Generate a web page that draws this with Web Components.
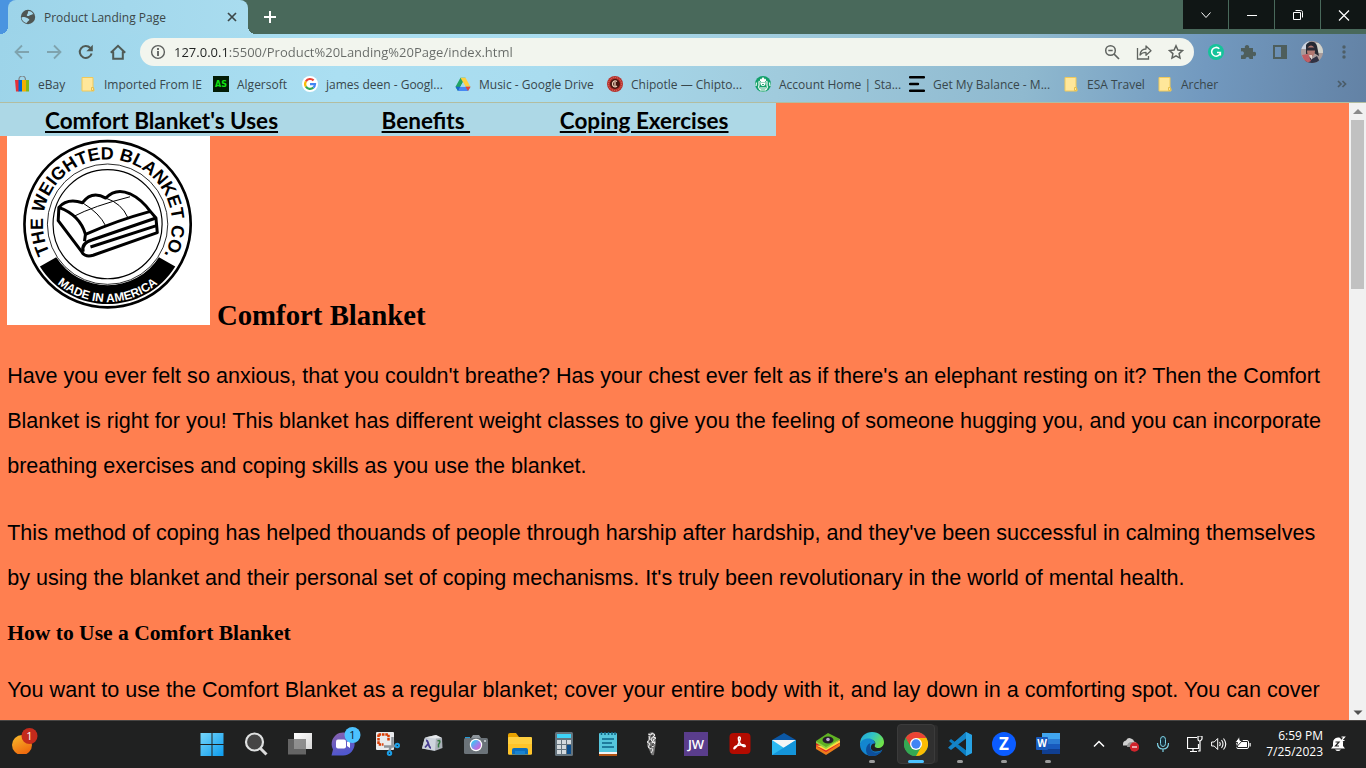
<!DOCTYPE html>
<html lang="en">
<head>
<meta charset="utf-8">
<title>Product Landing Page</title>
<style>
html, body { margin: 0; height: 100%; }
body { font-family: "Open Sans", "Noto Sans", sans-serif; font-size: 12px; overflow: hidden; }
</style>
</head>
<body>
<desktop-screen></desktop-screen>
<script>
const define = (name, html) => {
  const template = document.createElement('template');
  template.innerHTML = html;
  customElements.define(name, class extends HTMLElement {
    constructor() {
      super();
      this.attachShadow({ mode: 'open' }).append(template.content.cloneNode(true));
    }
  });
};

/* ---------- icon set ---------- */
const folder = '<path d="M2 1.5h11v10.5l1 .5v2.5H2z" fill="#ffe79a" stroke="#f0c95a"/><path d="M11.5 14.5v-3h2v3z" fill="#ffe79a" stroke="#e8c04a"/>';
const icons = {
  globe: [16, '<circle cx="8" cy="8" r="7.200" fill="#4f5653"/><path d="M1.500 8.500c2-.5 3.500-.6 5 .2 1.500.4 1.600 1 2.300 1.300 1 .5.500 1.500-.5 2-1 .4-.8 1.500-1.800 2C4 13.500 1.500 11 1.500 8.500zM8.500 2c2 0 4 1.200 5 3.300-1.200-.5-1.700.8-2.700.6-1-.2-1.500 1.300-2.700 1.200-1.200 0-1.800-1.200-.8-1.900C8.300 4.500 7.500 3 8.500 2z" fill="#a5d8eb"/>'],
  close: [16, '<path d="M4 4l8 8M12 4l-8 8" stroke="#3c4748" stroke-width="1.700"/>'],
  plus: [16, '<path d="M8 2v12M2 8h12" stroke="#fff" stroke-width="2"/>'],
  down: [16, '<path d="M3.500 5.500 8 10.500l4.500-5" fill="none" stroke="#fff"/>'],
  minimize: [16, '<path d="M3 8.500h10" stroke="#fff"/>'],
  restore: [16, '<path d="M5.500 3.500h5c1.500 0 2 .7 2 2v5M3.500 5.500h7v7h-7z" fill="none" stroke="#fff" stroke-linejoin="round"/>'],
  quit: [16, '<path d="M3 3.500l10 10M13 3.500l-10 10" stroke="#fff" stroke-width="1.200"/>'],
  back: [16, '<path d="M15 8H2M8 1.500 1.500 8 8 14.500" fill="none" stroke="#7fa3ae" stroke-width="1.800"/>'],
  forward: [16, '<path d="M1 8h13M8 1.500 14.500 8 8 14.500" fill="none" stroke="#7fa3ae" stroke-width="1.800"/>'],
  reload: [16, '<path d="M13.600 9.500A6 6 0 1 1 12.300 4" fill="none" stroke="#4f5a55" stroke-width="2"/><path d="M14.800.8v6.400H8.400z" fill="#4f5a55"/>'],
  home: [16, '<path d="M.8 8.800 8 1.800l7.200 7M3.200 7.500v7.200h9.600V7.500" fill="none" stroke="#4f5a55" stroke-width="2"/>'],
  info: [16, '<circle cx="8" cy="8" r="6.400" fill="none" stroke="#5b5e5c" stroke-width="1.400"/><path d="M8 7v5M8 4v2" stroke="#5b5e5c" stroke-width="1.800"/>'],
  zoomout: [16, '<circle cx="6.500" cy="6.500" r="4.800" fill="none" stroke="#5f635f" stroke-width="1.500"/><path d="M10 10l5 5M4.300 6.500h4.400" stroke="#5f635f" stroke-width="1.700"/>'],
  share: [16, '<path d="M1.500 4v11h11v-3" fill="none" stroke="#5f635f" stroke-width="1.300"/><path d="M4 11c.4-4 3-6 6-6V2l5 4.700-5 4.500V8.300C7.500 8.300 5.500 9 4 11z" fill="none" stroke="#5f635f" stroke-width="1.300" stroke-linejoin="round"/>'],
  star: [16, '<path d="M8 1.800l1.900 4.200 4.600.5-3.400 3.100.9 4.500L8 11.800l-4 2.300.9-4.500L1.500 6.500 6.100 6z" fill="none" stroke="#5f635f" stroke-width="1.500"/>'],
  grammarly: [16, '<circle cx="8" cy="8" r="8" fill="#15c39a"/><path d="M11.300 4.800A4.400 4.400 0 1 0 12.400 8.500H9M12.400 8.500v3" fill="none" stroke="#fff" stroke-width="1.500"/>'],
  puzzle: [16, '<path d="M1 4h4a2.200 2.200 0 1 1 4 0h4v4a2.200 2.200 0 1 1 0 3.800V15H9.500a2 2 0 1 0-4 0H1v-4a2 2 0 1 0 0-3.500z" fill="#4e5e5c"/>'],
  sidepanel: [16, '<path d="M2 2h12v12H2z" fill="none" stroke="#4e5e5c" stroke-width="2"/><path d="M9 2h5v12H9z" fill="#4e5e5c"/>'],
  avatar: [24, '<clipPath id="c"><circle cx="12" cy="12" r="11"/></clipPath><g clip-path="url(#c)"><path d="M0 0h24v24H0z" fill="#a99c9b"/><path d="M0 0h9v9H0z" fill="#cdd5e2"/><path d="M15 3h9v10h-9z" fill="#d2d3cc"/><path d="M6 5c3-5 10-4 11 1l2 10-5-3-8 1z" fill="#252932"/><ellipse cx="11" cy="11" rx="4" ry="5.500" fill="#b17870"/><path d="M6.500 7.500h9v3h-9z" fill="#2b2b35"/><path d="M3 24l4-8 5 3 5-3 4 8z" fill="#303244"/><path d="M2 15l6-1 3 7-6 3z" fill="#c05d64"/><path d="M9 15h3v5z" fill="#e7d5cf"/></g>'],
  dots: [16, '<circle cx="8" cy="3" r="1.700" fill="#4e5e66"/><circle cx="8" cy="8" r="1.700" fill="#4e5e66"/><circle cx="8" cy="13" r="1.700" fill="#4e5e66"/>'],
  more: [16, '<path d="M4 5l3 3-3 3M8.500 5l3 3-3 3" fill="none" stroke="#4b5c68" stroke-width="1.700"/>'],
  ebay: [16, '<path d="M5 5V3a3.200 3 0 0 1 6.400 0v2" fill="none" stroke="#7c8589" stroke-width="1.200"/><path d="M1 4h4v11.500H2z" fill="#e53238"/><path d="M4.500 4H8v11.500H4.500z" fill="#0064d2"/><path d="M8 4h4v11.500H8z" fill="#f5af02"/><path d="M12 4h3v11.500h-3z" fill="#86b817"/>'],
  folder: [16, folder],
  alger: [16, '<path d="M0 0h16v16H0z" fill="#031c05"/><text x="8" y="11" text-anchor="middle" font-family="DejaVu Sans" font-size="8" font-weight="700" fill="#12e212">AS</text>'],
  google: [16, '<circle cx="8" cy="8" r="8" fill="#fff"/><g fill="none" stroke-width="2.200"><path d="M3.900 5.300A5 5 0 0 1 11.600 4.400" stroke="#ea4335"/><path d="M3.900 5.300A5 5 0 0 0 3.900 10.700" stroke="#fbbc05"/><path d="M3.900 10.700A5 5 0 0 0 11.300 11.700" stroke="#34a853"/><path d="M11.300 11.700A5 5 0 0 0 13 8.200H8" stroke="#4285f4"/></g>'],
  drive: [16, '<path d="M5.500 1.800h5L5 11.300 3 15 .5 10.700z" fill="#1fa463"/><path d="M5.500 1.800h5l5 8.900h-5z" fill="#ffcf3f"/><path d="M5 10.700h10.500L13 15H3z" fill="#4688f4"/><path d="M10.500 10.700h5L13 15z" fill="#ea4335"/><path d="M.5 10.700H5.300L3 15z" fill="#1767d1"/><path d="M8 6.300l2.500 4.400h-5z" fill="#a5d8eb"/>'],
  chipotle: [16, '<circle cx="8" cy="8" r="8" fill="#b8302b"/><circle cx="8" cy="8" r="6.500" fill="none" stroke="#d78a7b" stroke-width=".8" stroke-dasharray="1 1"/><circle cx="8" cy="8" r="5" fill="#45150f"/><path d="M10 5.500c-3-1.500-4.500.5-4.500 2.500s2 4 4.500 2M8 6v4" fill="none" stroke="#ecd0b9" stroke-width="1.300"/>'],
  starbucks: [16, '<circle cx="8" cy="8" r="8" fill="#12a06a"/><path d="M5 2.500l1 1L8 1l2 2.500 1-1V5H5z" fill="#fff"/><ellipse cx="8" cy="7" rx="2.600" ry="3" fill="#fff"/><path d="M4.500 5C3 7 5 8 3.500 11L5 14M11.500 5C13 7 11 8 12.500 11L11 14M6 11v4.500M10 11v4.500M8 11v4.500M1.500 6.500 1 10M14.500 6.500 15 10" fill="none" stroke="#e7f5ee" stroke-width="1.300"/><path d="M6.500 6.500h1M8.500 6.500h1M7 8.500h2" stroke="#00935c" stroke-width=".8"/>'],
  balance: [16, '<path d="M1 1.200h14M1 8h8M1 14.800h14" stroke="#000" stroke-width="2.400" stroke-linecap="round"/>'],
  weather: [26, '<defs><linearGradient id="g" x2=".5" y2="1"><stop stop-color="#f8bd2c"/><stop offset="1" stop-color="#ef6a0e"/></linearGradient></defs><circle cx="10" cy="17" r="10" fill="url(#g)"/><circle cx="17.500" cy="8" r="8" fill="#c42b1c"/><text x="17.500" y="12" text-anchor="middle" font-family="Open Sans" font-size="11" fill="#fff">1</text>'],
  windows: [24, '<defs><linearGradient id="g" gradientUnits="userSpaceOnUse" x1="0" y1="0" x2="24" y2="24"><stop stop-color="#7ad8fb"/><stop offset="1" stop-color="#0b9bee"/></linearGradient></defs><path d="M.5 1h11v11H.5zM12.500 1h11v11h-11zM.5 13h11v11H.5zM12.500 13h11v11h-11z" fill="url(#g)"/>'],
  search: [24, '<circle cx="10.500" cy="10" r="8.500" fill="#454545" stroke="#dfe1e1" stroke-width="2.200"/><path d="M16.500 16.500l6 6" stroke="#dcdcdc" stroke-width="3"/>'],
  taskview: [24, '<defs><linearGradient id="g" x2="1" y2="1"><stop stop-color="#fff"/><stop offset="1" stop-color="#d6d6d6"/></linearGradient></defs><path d="M6 1h18v16H6z" fill="url(#g)"/><path d="M0 7h18v15.500H0z" fill="#777" fill-opacity=".8"/>'],
  chat: [36, '<defs><linearGradient id="g" x2=".3" y2="1"><stop stop-color="#8b62ac"/><stop offset="1" stop-color="#4f57cf"/></linearGradient></defs><path d="M5.500 29.500l1.500-6A11.500 11.500 0 1 1 17 29.500z" fill="url(#g)"/><rect x="10" y="13.500" width="10" height="9" rx="2" fill="#fff"/><path d="M21 16l3-2v8l-3-2z" fill="#fff"/><circle cx="26.500" cy="9" r="8" fill="#4cc2ff"/><text x="26.500" y="13" text-anchor="middle" font-family="Open Sans" font-size="11" fill="#0b2130">1</text>'],
  snip: [24, '<rect width="18" height="18" rx="1" fill="#e9ebee"/><path d="M2.500 2.500h10v6M2.500 2.500v10h5" fill="none" stroke="#d83b01" stroke-width="2.500" stroke-dasharray="2.600 .8"/><path d="M16.500 5v9.500H8M16.500 14.500l4-1M14.500 15l-1 4" fill="none" stroke="#8d949a" stroke-width="2.500"/><circle cx="21.300" cy="13.500" r="1.700" fill="#222" stroke="#1a9fe8" stroke-width="2"/><circle cx="13.500" cy="21.300" r="1.700" fill="#222" stroke="#1a9fe8" stroke-width="2"/>'],
  dice: [24, '<path d="M5 5.500 16 3l6 3 .5 10-8 3L2 16.500z" fill="#a9b0b7"/><path d="M4.500 6.500 16 5.500l-1 13-13-2z" fill="#cdd4dc"/><path d="M5 5.500 16 3l6 3-6 .5z" fill="#e5e8eb"/><path d="M6 8.500c3-.5 2 7.500 5 7.500M8 12l-3 3.500" fill="none" stroke="#473c91" stroke-width="1.800"/><path d="M17.500 9c3-1.500 3 1 1 3.500v3" fill="none" stroke="#367a43" stroke-width="1.500"/>'],
  camera: [24, '<defs><linearGradient id="g" x2="1" y2="1"><stop offset=".2" stop-color="#46bdf0"/><stop offset=".6" stop-color="#a47bec"/><stop offset="1" stop-color="#e25fb2"/></linearGradient></defs><path d="M1 5h5v3H1z" fill="#239bd8"/><path d="M7 6l2-3h6l2 3z" fill="#8d959b"/><rect y="6" width="24" height="16" rx="1.500" fill="#6b7379"/><circle cx="12" cy="13" r="6.200" fill="#fff"/><circle cx="12" cy="13" r="5" fill="url(#g)"/><path d="M20 8h2v2h-2z" fill="#b8bec2"/>'],
  explorer: [24, '<path d="M0 3q0-2 2-2h6l3 4v4H0z" fill="#e8a200"/><rect y="5" width="24" height="17.500" rx="1" fill="#ffcf40"/><path d="M0 12h24v9q0 1.500-1.500 1.500h-21Q0 22.500 0 21z" fill="#ffc42a"/><path d="M4 22.500V18q0-2 2-2h12q2 0 2 2v4.500z" fill="#0d6ebd"/><path d="M7 19h10v3.500H7z" fill="#1983d1"/>'],
  calc: [24, '<rect x="3" width="18" height="24" rx="1.500" fill="#64737d"/><path d="M5 2h14v4H5z" fill="#3ed3f8"/><path d="M5 8h4v4H5zM10 8h4v4h-4zM15 8h4v4h-4zM5 13h4v4H5zM10 13h4v4h-4zM5 18h4v4H5zM10 18h4v4h-4z" fill="#d3d9dd"/><path d="M15 13h4v9h-4z" fill="#0b4e8d"/>'],
  notepad: [24, '<rect x="3" y="1" width="18" height="21" rx="1" fill="#55c6dc"/><path d="M3 20h18v2H3z" fill="#f3f3f3"/><path d="M3 22h18v2H3z" fill="#b35413"/><path d="M6 7h12M6 11h10M6 15h12" stroke="#0c6488" stroke-width="1.700"/><path d="M5.500 0v3M9 0v3M12.500 0v3M16 0v3M19 0v3" stroke="#126585" stroke-width="1.500"/>'],
  sketch: [24, '<path d="M9 1q4-2 6 1l1 8-2 13q-2 1-3-1l-4-9z" fill="#777"/><path d="M8 2l3 1 1-2 3 2-2 2 3 1-3 2 2 3-3-1 2 4-3 1 2 3-2 3M9 4l1 4-3 2 3 2-2 3 3 2M13 4l-2 4 4 4" fill="none" stroke="#eee"/><path d="M12 3v2M9 9h2M13 11v3M10 15h2" stroke="#151515"/>'],
  jw: [24, '<path d="M0 0h24v24H0z" fill="#5a3d8c"/><text x="12" y="17" text-anchor="middle" font-family="Open Sans" font-weight="600" font-size="13" fill="#fff">JW</text>'],
  acrobat: [24, '<rect x="1.500" y="1" width="21" height="21" rx="4" fill="#b30b00"/><path d="M11 5c2.500-.5 1 4-1 7.500S5.500 18 6 16s6-3.500 9-3.200 3 2.400.7 1.700C13 13.500 10 9 10.300 6z" fill="none" stroke="#fff" stroke-width="1.400"/>'],
  mail: [24, '<path d="M0 8 12 1l12 7v3H0z" fill="#0b57a4"/><path d="M0 8h24v15H0z" fill="#2cb9f0"/><path d="M0 8h24L12 16z" fill="#f5f5f5"/><path d="M0 23 24 8v15z" fill="#1495da"/>'],
  stack: [24, '<path d="M0 17l10 6 14-9v-3L0 14z" fill="#ec7c1b"/><path d="M0 14l10 6 14-9V8L0 11z" fill="#e01f26"/><path d="M0 13.500l10 5 14-8v-2L10 14z" fill="#ffdd3c"/><path d="M0 9 12 1l12 6-14 9z" fill="#60b223"/><path d="M0 9v2l10 6 14-9V7l-14 8z" fill="#91d443"/><ellipse cx="12" cy="8" rx="5.500" ry="3.500" fill="#241c2b"/><circle cx="12" cy="7.500" r="1.800" fill="#bfa8d6"/>'],
  edge: [24, '<defs><linearGradient id="g" x1="0" x2="1" y2=".5"><stop stop-color="#1f9fdb"/><stop offset=".5" stop-color="#31c4c6"/><stop offset="1" stop-color="#6fe24b"/></linearGradient></defs><path d="M0 12C0 4 6 0 12 0c7 0 12 5 12 10 0 4-3 6-6 6-2 0-4-1-3-3 1-1.500.3-5-4-5C6 8 3 9 0 12z" fill="url(#g)"/><path d="M0 12C1 8 5 6.500 8.500 6.500c4 0 6.500 2.500 6.500 5-5-1-6.500 8 1 8 3 0 5-1 6.500-2C20 22 16 24 12 24 5 24-.3 19 0 12z" fill="#1386cf"/><path d="M8.500 23.500c-4-3-3-11 2-12.500-2 4 1 9.500 6 9.500 2.500 0 5-1.500 6-3-2 5-8 8-14 6z" fill="#0d4f9b"/>'],
  chrome: [24, '<circle cx="12" cy="12" r="12" fill="#34a853"/><path d="M12 12 1.600 6A12 12 0 0 1 22.400 6z" fill="#ea4335"/><path d="M12 12V6h10.400A12 12 0 0 1 12 24l5.200-9z" fill="#fbbc04"/><path d="M12 12 6.800 15 1.600 6z" fill="#ea4335"/><path d="M1.600 6 6.800 15 12 24A12 12 0 0 1 1.600 6z" fill="#34a853"/><circle cx="12" cy="12" r="6" fill="#fff"/><circle cx="12" cy="12" r="4.700" fill="#4285f4"/>'],
  vscode: [24, '<path d="M18 0l6 3v18l-6 3L1 9l2-2 16 12V5L3 17l-2-2z" fill="#0b7dc2"/><path d="M18 0l6 3v18l-6 3z" fill="#28a3e4"/><path d="M18 0v6.500L3 18l-3-2.200z" fill="#1584c7"/>'],
  zoom: [24, '<circle cx="12" cy="12" r="12" fill="#0b5cff"/><text x="12" y="18" text-anchor="middle" font-family="Open Sans" font-weight="700" font-size="17" fill="#fff">Z</text>'],
  word: [24, '<path d="M6 1h18v6H6z" fill="#41a5ee"/><path d="M6 7h18v5H6z" fill="#2b7cd3"/><path d="M6 12h18v5H6z" fill="#185abd"/><path d="M6 17h18v5H6z" fill="#103f91"/><rect y="5" width="12" height="13" rx="1" fill="#185abd"/><text x="6" y="15" text-anchor="middle" font-family="Open Sans" font-weight="700" font-size="10" fill="#fff">W</text>'],
  chevron: [16, '<path d="M3 10.500l5-5 5 5" fill="none" stroke="#fff" stroke-width="1.500"/>'],
  onedrive: [16, '<path d="M0 8q0-3 3-3.500Q5 1 8 2.500q3 1 3 3 3 .5 3 4H0z" fill="#cfcfcf"/><path d="M4 11q0-5 5-5 3 0 4 5z" fill="#989898"/><circle cx="11.500" cy="11" r="4.700" fill="#d0242c"/><path d="M9 11h5" stroke="#fff" stroke-width="1.200"/>'],
  mic: [16, '<path d="M5.500 3.500q0-3 2.500-3t2.500 3v4q0 3-2.500 3t-2.500-3z" fill="#17303a" stroke="#7fd3e6"/><path d="M2.500 7q0 6 5.500 6t5.500-6M8 13v3" fill="none" stroke="#7fd3e6" stroke-width="1.200"/>'],
  network: [16, '<path d="M10 1.500H.5v11h11V8M3 15.500h7M6 12.500v3" fill="none" stroke="#fff" stroke-width="1.200"/><path d="M11 0v3q0 2 1.500 2T15 3V0zM13 5v10h-2" fill="none" stroke="#fff" stroke-width="1.200"/>'],
  sound: [16, '<path d="M.6 6h2.600l3.500-3.500v11L3.200 10H.6z" fill="none" stroke="#fff"/><path d="M8.500 6q1.500 2 0 4M10.500 4q3 4 0 8M12.500 2.500q4.500 5.500 0 11" fill="none" stroke="#fff" stroke-width="1.100"/>'],
  battery: [16, '<rect x="1.500" y="4.500" width="12" height="8" rx="1.500" fill="none" stroke="#fff"/><path d="M3 6h9v5H3z" fill="#fff"/><path d="M14.500 7h1.200v3.500h-1.200z" fill="#fff"/><path d="M4.500.5 0 6.500h2.500L1 11.500 7.500 4.500H5z" fill="#fff" stroke="#202121" stroke-width=".9"/>'],
  bell: [16, '<path d="M1 12.500 3 10V7q0-5 5-5.500h1q5 1 4 5.500v3l2 2.500zM5 13.500q3 3 6 0z" fill="#fff"/><path d="M9 0h7v6l-4-1z" fill="#222"/><path d="M5.500 6h3.500l-3.500 4H9" fill="none" stroke="#222" stroke-width="1.200"/><path d="M11.500 1h3l-3 3.500h3" fill="none" stroke="#fff" stroke-width="1.200"/>'],
  up: [16, '<path d="M8 5l5 5H3z" fill="#8a8a8a"/>'],
  lower: [16, '<path d="M8 11 3.500 6.500h9z" fill="#505050"/>']
};

customElements.define('ui-icon', class extends HTMLElement {
  constructor() { super(); this.attachShadow({ mode: 'open' }); }
  connectedCallback() {
    const [box, art] = icons[this.getAttribute('name')];
    this.shadowRoot.innerHTML = `<style>:host{display:block;flex:none;width:var(--icon,16px);height:var(--icon,16px)}svg{display:block;width:100%;height:100%}</style><svg viewBox="0 0 ${box} ${box}" aria-hidden="true">${art}</svg>`;
  }
});

/* button holding one icon, as wide as --cell */
customElements.define('icon-button', class extends HTMLElement {
  constructor() { super(); this.attachShadow({ mode: 'open' }); }
  connectedCallback() {
    this.shadowRoot.innerHTML = `<style>:host{display:flex;flex:none;width:var(--cell,32px)}
      button{all:unset;width:100%;display:flex;align-items:center;justify-content:center;cursor:default}</style>
      <button aria-label="${this.getAttribute('label')}"><ui-icon name="${this.getAttribute('icon')}"></ui-icon></button>`;
  }
});

define('tab-strip', `
<style>
:host{display:flex;height:34px;background:linear-gradient(90deg,#4a94e0 0 16px,#49695b 16px)}
.tab{display:flex;align-items:center;box-sizing:border-box;width:240px;margin-left:8px;padding:0 8px 0 12px;border-radius:8px 8px 0 0;background:linear-gradient(90deg,#9dd4e9,#a9dcef);color:#3c4748;position:relative}
.tab::before,.tab::after{content:"";position:absolute;bottom:0;width:8px;height:8px}
.tab::before{left:-8px;background:radial-gradient(circle at 0 0,transparent 8px,#9dd4e9 8px)}
.tab::after{right:-8px;background:radial-gradient(circle at 100% 0,transparent 8px,#a9dcef 8px)}
.tab span{flex:1;margin-left:8px}
.new{--cell:44px}
.win{display:flex;gap:1px;height:29px;margin-left:auto;--cell:45px}
.win icon-button{background:#101615}
</style>
<div class="tab"><ui-icon name="globe"></ui-icon><span>Product Landing Page</span><icon-button style="--cell:16px" icon="close" label="Close tab"></icon-button></div>
<icon-button class="new" icon="plus" label="New tab"></icon-button>
<div class="win"><icon-button icon="down" label="Search tabs"></icon-button><icon-button icon="minimize" label="Minimize"></icon-button><icon-button icon="restore" label="Restore"></icon-button><icon-button icon="quit" label="Close"></icon-button></div>`);

define('address-bar', `
<style>
:host{display:flex;align-items:center;flex:1;height:28px;border-radius:14px;background:#f2f5ee;padding:0 2px 0 10px}
input{flex:1;min-width:0;border:0;padding:0;margin-left:8px;outline:0;font:13px "Open Sans","Noto Sans",sans-serif;color:#666a67;background:linear-gradient(90deg,#202322 53px,#666a67 53px) text;-webkit-text-fill-color:transparent}
</style>
<ui-icon name="info"></ui-icon>
<input aria-label="Address" value="127.0.0.1:5500/Product%20Landing%20Page/index.html">
<icon-button icon="zoomout" label="Zoom"></icon-button><icon-button icon="share" label="Share"></icon-button><icon-button icon="star" label="Bookmark"></icon-button>`);

define('tool-bar', `
<style>
:host{display:flex;align-items:center;height:36px;padding:0 6px}
address-bar{margin:0 6px}
.avatar{--icon:24px}
</style>
<icon-button icon="back" label="Back"></icon-button><icon-button icon="forward" label="Forward"></icon-button><icon-button icon="reload" label="Reload"></icon-button><icon-button icon="home" label="Home"></icon-button>
<address-bar></address-bar>
<icon-button icon="grammarly" label="Grammarly"></icon-button><icon-button icon="puzzle" label="Extensions"></icon-button><icon-button icon="sidepanel" label="Side panel"></icon-button><icon-button class="avatar" icon="avatar" label="Profile"></icon-button><icon-button icon="dots" label="Menu"></icon-button>`);

customElements.define('book-mark', class extends HTMLElement {
  constructor() { super(); this.attachShadow({ mode: 'open' }); }
  connectedCallback() {
    this.shadowRoot.innerHTML = `<style>:host{display:block;flex:none}
      a{display:flex;align-items:center;gap:8px;color:#38474c;text-decoration:none;white-space:nowrap}</style>
      <a href="#"><ui-icon name="${this.getAttribute('icon')}"></ui-icon><slot></slot></a>`;
  }
});

define('bookmarks-bar', `
<style>
:host{display:flex;align-items:center;height:32px;padding:0 8px 4px 14px;box-sizing:border-box}
nav{display:grid;grid-template-columns:66px 133px 89px 153px 152px 148px 154px 154px 94px 64px;flex:1}
</style>
<nav aria-label="Bookmarks">
<book-mark icon="ebay">eBay</book-mark><book-mark icon="folder">Imported From IE</book-mark><book-mark icon="alger">Algersoft</book-mark><book-mark icon="google">james deen - Googl...</book-mark><book-mark icon="drive">Music - Google Drive</book-mark><book-mark icon="chipotle">Chipotle — Chipto...</book-mark><book-mark icon="starbucks">Account Home | Sta...</book-mark><book-mark icon="balance">Get My Balance - M...</book-mark><book-mark icon="folder">ESA Travel</book-mark><book-mark icon="folder">Archer</book-mark>
</nav>
<icon-button icon="more" label="More bookmarks"></icon-button>`);

define('browser-chrome', `
<style>
:host{display:block;flex:none}
.bars{background:linear-gradient(97deg,#9dd4e9,#abdff2 25%,#a9dcef 40%,#a0cbdd 57%,#8fb9cf 75%,#7299bf 88%,#6382a5);border-bottom:1px solid #b3bda0}
</style>
<tab-strip></tab-strip>
<div class="bars"><tool-bar></tool-bar><bookmarks-bar></bookmarks-bar></div>`);

define('blanket-logo', `
<style>:host{display:inline-block}svg{display:block;background:#fff}</style>
<svg width="225" height="210" viewBox="21 108 609 567" role="img" aria-label="The Weighted Blanket Co., made in America">
<defs><path id="top" d="M150 459A194 194 0 1 1 482 483"/><path id="bottom" d="M145 524A234 234 0 0 0 502 524"/></defs>
<g fill="none" stroke="#000"><circle cx="323.500" cy="372.500" r="250" stroke-width="8"/><circle cx="323.500" cy="372.500" r="181" stroke-width="2.500"/><circle cx="323.500" cy="372.500" r="164" stroke-width="3.500"/></g>
<path d="M120 500 169 472A184 184 0 0 0 478 472L527 500A240 240 0 0 1 120 500z"/>
<g font-family="Liberation Sans" font-weight="700"><text font-size="54"><textPath href="#top">THE WEIGHTED BLANKET CO.</textPath></text>
<text font-size="36" fill="#fff" text-anchor="middle"><textPath href="#bottom" startOffset="50%">MADE IN AMERICA</textPath></text></g>
<g fill="none" stroke="#000" stroke-width="9" stroke-linejoin="round"><path d="M177 322Q202 293 248 308 276 270 318 294 348 262 391 281 425 297 452 334 350 362 257 403 240 345 177 322zM177 322 175 362 246 456Q256 473 280 466L473 398 469 354 452 334"/><path d="M257 403 254 424M469 354 276 420Q243 430 250 456M473 376 272 441"/>
<g stroke-width="3"><path d="M248 308Q300 340 318 378M318 294Q366 310 384 352M220 350Q280 318 391 290"/></g></g>
</svg>`);

define('site-nav', `
<style>
:host{display:block;width:862px;height:37px;background:#add8e6}
ul{display:grid;grid-template-columns:374px 198px 1fr;margin:0;padding:0;list-style:none}
li{padding-left:50px}
a{font:700 25px/40px Lato,sans-serif;color:#000;text-decoration:underline}
</style>
<ul><li><a href="#uses">Comfort Blanket's Uses</a></li><li><a href="#benefits">Benefits&nbsp;</a></li><li><a href="#coping">Coping Exercises</a></li></ul>`);

/* the browser shows this page at its 90% zoom level */
define('product-page', `
<style>
:host{display:block;flex:1;min-width:0;overflow:hidden;background:#ff7f50;color:#000}
.zoomed{zoom:90%}
main{padding:0 8px}
h1{margin:0 0 24px;font:700 32px/36px "Liberation Serif",serif}
blanket-logo{vertical-align:baseline}
h2{margin:0 0 24px;font:700 24px/27px "Liberation Serif",serif}
p{margin:0 0 24px;font:24px/50px "Liberation Sans",sans-serif}
</style>
<div class="zoomed">
<site-nav></site-nav>
<main>
<h1><blanket-logo></blanket-logo> Comfort Blanket</h1>
<p>Have you ever felt so anxious, that you couldn't breathe? Has your chest ever felt as if there's an elephant resting on it? Then the Comfort Blanket is right for you! This blanket has different weight classes to give you the feeling of someone hugging you, and you can incorporate breathing exercises and coping skills as you use the blanket.</p>
<p>This method of coping has helped thouands of people through harship after hardship, and they've been successful in calming themselves by using the blanket and their personal set of coping mechanisms. It's truly been revolutionary in the world of mental health.</p>
<h2>How to Use a Comfort Blanket</h2>
<p>You want to use the Comfort Blanket as a regular blanket; cover your entire body with it, and lay down in a comforting spot. You can cover</p>
</main>
</div>`);

define('scroll-track', `
<style>
:host{display:flex;flex-direction:column;flex:none;width:17px;background:#f1f1f1;--cell:17px}
icon-button{height:17px}
.rail{flex:1;padding:0 2px}
.thumb{height:29%;background:#c1c1c1}
</style>
<icon-button icon="up" label="Scroll up"></icon-button><div class="rail"><div class="thumb"></div></div><icon-button icon="lower" label="Scroll down"></icon-button>`);

customElements.define('task-app', class extends HTMLElement {
  constructor() { super(); this.attachShadow({ mode: 'open' }); }
  connectedCallback() {
    this.shadowRoot.innerHTML = `<style>
      :host{display:block;flex:none;width:44px;height:48px}
      button{all:unset;position:relative;box-sizing:border-box;width:100%;height:100%;display:grid;place-items:center;--icon:24px}
      :host([icon=chat]) button{--icon:36px}
      :host([state=active]) button::before{content:"";position:absolute;z-index:-1;inset:4px 3px;border:1px solid #3b3b3b;border-radius:4px;background:#303030;box-shadow:4px 0 0 -1px #2b2b2b}
      :host([state]) button::after{content:"";position:absolute;bottom:5px;left:19px;width:6px;height:3px;border-radius:2px;background:#9b9b9b}
      :host([state=active]) button::after{left:14px;width:16px;background:#4cc2ff}
      :host{position:relative;z-index:0}</style>
      <button aria-label="${this.getAttribute('label')}"><ui-icon name="${this.getAttribute('icon')}"></ui-icon></button>`;
  }
});

define('system-tray', `
<style>
:host{display:flex;align-items:center;height:48px;color:#fff;padding-right:20px}
.quick{--cell:24px;display:flex}
.one{--cell:32px;display:flex;margin-right:4px}
time{text-align:right;line-height:16px;margin:0 7px 0 11px}
.bell{--cell:16px}
</style>
<div class="one"><icon-button icon="chevron" label="Hidden icons"></icon-button><icon-button icon="onedrive" label="OneDrive"></icon-button><icon-button icon="mic" label="Microphone"></icon-button></div>
<div class="quick"><icon-button icon="network" label="Network"></icon-button><icon-button icon="sound" label="Volume"></icon-button><icon-button icon="battery" label="Battery"></icon-button></div>
<time datetime="2023-07-25T18:59">6:59 PM<br>7/25/2023</time>
<icon-button class="bell" icon="bell" label="Notifications"></icon-button>`);

define('task-bar', `
<style>
:host{display:flex;flex:none;height:48px;background:#202121;box-shadow:inset 0 1px #484644}
.widgets{--icon:26px;--cell:26px;width:178px;padding-left:12px;display:flex}
.widgets icon-button{height:42px}
.apps{display:flex}
system-tray{margin-left:auto}
</style>
<div class="widgets"><icon-button icon="weather" label="Widgets"></icon-button></div>
<div class="apps">
<task-app icon="windows" label="Start"></task-app><task-app icon="search" label="Search"></task-app><task-app icon="taskview" label="Task view"></task-app><task-app icon="chat" label="Chat"></task-app><task-app icon="snip" label="Snipping Tool"></task-app><task-app icon="dice" label="Dice"></task-app><task-app icon="camera" label="Camera"></task-app><task-app icon="explorer" label="File Explorer"></task-app><task-app icon="calc" label="Calculator"></task-app><task-app icon="notepad" label="Notepad"></task-app><task-app icon="sketch" label="Sketch"></task-app><task-app icon="jw" label="JW Library"></task-app><task-app icon="acrobat" label="Acrobat"></task-app><task-app icon="mail" label="Mail"></task-app><task-app icon="stack" label="BlueStacks"></task-app><task-app icon="edge" label="Edge" state="open"></task-app><task-app icon="chrome" label="Chrome" state="active"></task-app><task-app icon="vscode" label="Visual Studio Code" state="open"></task-app><task-app icon="zoom" label="Zoom" state="open"></task-app><task-app icon="word" label="Word" state="open"></task-app>
</div>
<system-tray></system-tray>`);

define('desktop-screen', `
<style>
:host{display:flex;flex-direction:column;height:100vh}
.view{display:flex;flex:1;min-height:0}
</style>
<browser-chrome></browser-chrome>
<div class="view"><product-page></product-page><scroll-track></scroll-track></div>
<task-bar></task-bar>`);
</script>
</body>
</html>
